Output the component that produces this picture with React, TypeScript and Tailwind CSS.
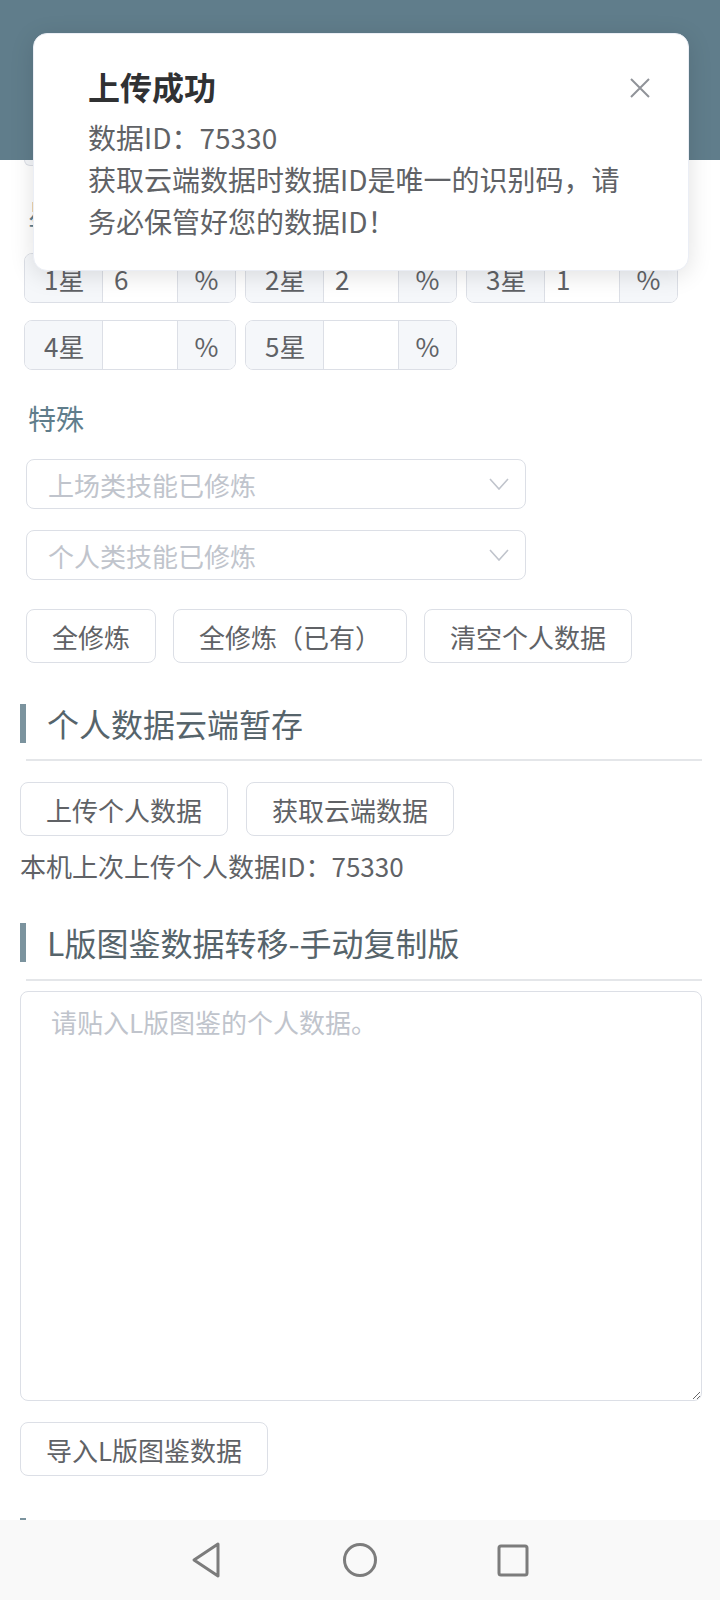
// Mobile page: personal data form with an "upload success" notification on top.
const font = { fontFamily: '"Noto Sans CJK SC", "Noto Sans", sans-serif' };

function StarGroup({ label, value }: { label: string; value: string }) {
  return (
    <div className="flex h-[50px] w-[212px] overflow-hidden rounded-[8px] border border-[#dcdfe6] text-[26px] text-[#606266]">
      <div className="flex w-[78px] items-center border-r border-[#dcdfe6] bg-[#f5f7fa] pl-[19px]">{label}</div>
      <div className="flex w-[75px] items-center border-r border-[#dcdfe6] bg-white pl-[11px]">{value}</div>
      <div className="flex flex-1 items-center justify-center bg-[#f5f7fa]">%</div>
    </div>
  );
}

function Select({ placeholder }: { placeholder: string }) {
  return (
    <div className="flex h-[50px] w-[500px] items-center justify-between rounded-[8px] border border-[#dcdfe6] bg-white pl-[21px] pr-[16px]">
      <span className="text-[26px] text-[#c0c4cc]">{placeholder}</span>
      <svg width="20" height="12" viewBox="0 0 20 12" fill="none">
        <polyline points="1,1 10,11 19,1" stroke="#c0c4cc" strokeWidth="1.6" />
      </svg>
    </div>
  );
}

function Btn({ children }: { children: React.ReactNode }) {
  return (
    <button className="flex h-[54px] items-center rounded-[8px] border border-[#dcdfe6] bg-white px-[25px] text-[26px] text-[#606266]">
      {children}
    </button>
  );
}

function Heading({ children }: { children: React.ReactNode }) {
  return (
    <div className="h-[39px] border-l-[6px] border-[#7b939e] pl-[21px] text-[32px] leading-[39px] text-[#56646b]">
      {children}
    </div>
  );
}

export default function App() {
  return (
    <div className="relative flex h-[1600px] w-[720px] flex-col overflow-hidden bg-white" style={font}>
      <div className="h-[160px] shrink-0 bg-[#607d8b]" />

      <main className="min-h-0 flex-1 overflow-hidden">
        <div className="px-[24px]">
          <div className="h-[6px] w-[212px] rounded-b-[8px] border border-t-0 border-[#dcdfe6] bg-[#f5f7fa]" />
          <div className="mt-[26px] pl-[4px] text-[28px] leading-[42px] text-[#607d8b]">星级</div>
          <div className="mt-[19px] flex flex-wrap gap-x-[9px] gap-y-[17px]">
            <StarGroup label="1星" value="6" />
            <StarGroup label="2星" value="2" />
            <StarGroup label="3星" value="1" />
            <StarGroup label="4星" value="" />
            <StarGroup label="5星" value="" />
          </div>
          <div className="mt-[27px] pl-[4px] text-[28px] leading-[42px] text-[#607d8b]">特殊</div>
          <div className="mt-[20px] flex flex-col gap-[21px] pl-[2px]">
            <Select placeholder="上场类技能已修炼" />
            <Select placeholder="个人类技能已修炼" />
          </div>
          <div className="mt-[29px] flex gap-[17px] pl-[2px]">
            <Btn>全修炼</Btn>
            <Btn>全修炼（已有）</Btn>
            <Btn>清空个人数据</Btn>
          </div>
        </div>

        <div className="mt-[41px] pl-[20px] pr-[18px]">
          <Heading>个人数据云端暂存</Heading>
          <div className="ml-[6px] mt-[16px] h-[2px] bg-[#e4e6e9]" />
          <div className="mt-[21px] flex gap-[18px]">
            <Btn>上传个人数据</Btn>
            <Btn>获取云端数据</Btn>
          </div>
          <div className="mt-[10px] text-[26px] leading-[40px] text-[#606266]">本机上次上传个人数据ID：75330</div>

          <div className="mt-[37px]">
            <Heading>L版图鉴数据转移-手动复制版</Heading>
          </div>
          <div className="ml-[6px] mt-[17px] h-[2px] bg-[#e4e6e9]" />
          <textarea
            className="mt-[10px] block h-[410px] w-full resize-y rounded-[8px] border border-[#dcdfe6] px-[30px] py-[10px] text-[26px] leading-[39px] text-[#606266] outline-none placeholder:text-[#c0c4cc]"
            placeholder="请贴入L版图鉴的个人数据。"
          />
          <div className="mt-[21px] flex">
            <Btn>导入L版图鉴数据</Btn>
          </div>
          <div className="mt-[42px] h-[39px] w-[6px] bg-[#7b939e]" />
        </div>
      </main>

      <nav className="flex h-[80px] shrink-0 items-center justify-center bg-[#f9f9f9]">
        <div className="flex w-[340px] items-center justify-between">
          <svg width="34" height="38" viewBox="0 0 34 38" fill="none">
            <path d="M28 3 L4 19 L28 35 Z" stroke="#7c7c7c" strokeWidth="3" strokeLinejoin="round" />
          </svg>
          <svg width="36" height="36" viewBox="0 0 36 36" fill="none">
            <circle cx="18" cy="18" r="15.5" stroke="#7c7c7c" strokeWidth="3" />
          </svg>
          <svg width="34" height="34" viewBox="0 0 34 34" fill="none">
            <rect x="3" y="3" width="28" height="29" rx="2" stroke="#7c7c7c" strokeWidth="3" />
          </svg>
        </div>
      </nav>

      <div className="absolute left-[33px] top-[33px] w-[656px] rounded-[14px] border border-[#ebeef5] bg-white pb-[28px] pl-[54px] pr-[52px] pt-[28px] shadow-[0_4px_24px_rgba(0,0,0,0.12)]">
        <div className="text-[32px] font-bold leading-[48px] text-[#303133]">上传成功</div>
        <div className="mt-[6px] text-[28px] leading-[42px] text-[#606266]">
          数据ID：75330
          <br />
          获取云端数据时数据ID是唯一的识别码，请
          <br />
          务必保管好您的数据ID！
        </div>
        <svg className="absolute right-[37px] top-[43px]" width="22" height="22" viewBox="0 0 22 22" fill="none">
          <path d="M2 2 L20 20 M20 2 L2 20" stroke="#909399" strokeWidth="2" />
        </svg>
      </div>
    </div>
  );
}
